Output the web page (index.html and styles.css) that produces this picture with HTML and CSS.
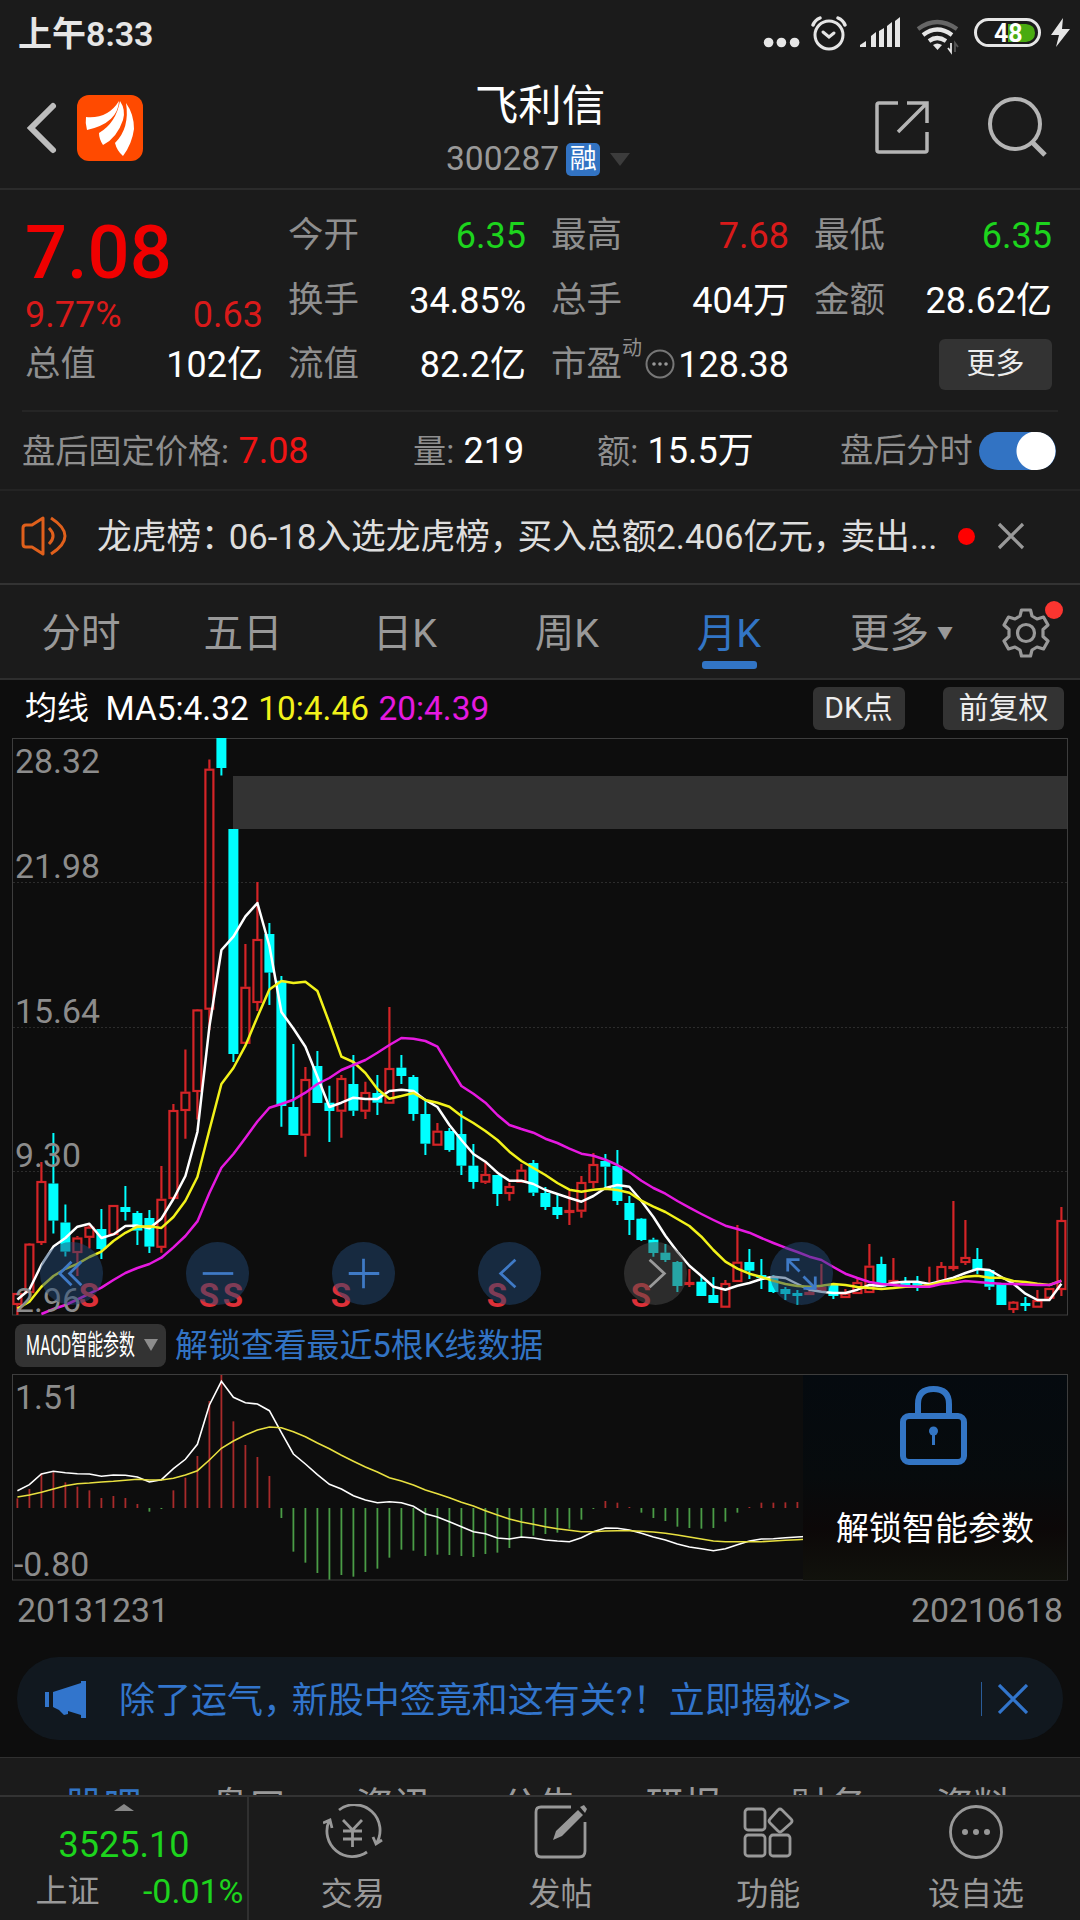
FILE: index.html
```
<!DOCTYPE html>
<html lang="zh-CN">

<head>
  <meta charset="utf-8">
  <title>飞利信 300287</title>
  <link rel="stylesheet" href="styles.css">
</head>

<body>
  <div class="page">
    <div class="statusBar">
      <span>上午8:33</span>
      <svg class="statusIcons" width="312" height="66" viewBox="760 0 312 66">
        <g fill="#e6e6e6">
          <circle cx="768.6" cy="42.5" r="4.8" />
          <circle cx="781.4" cy="42.5" r="4.8" />
          <circle cx="794.6" cy="42.5" r="4.8" />
          <path d="M860 47v-2l6-4v6zM871 47V36l5-4v15zM879 47V31l5-3v19zM887 47V26l5-4v25zM895 47V21l5-4v30z" />
          <path d="M1063 18l-12 17h8l-3 12 14-18h-8z" />
        </g>
        <g fill="none" stroke="#e6e6e6" stroke-width="3" stroke-linecap="round">
          <circle cx="829" cy="35" r="14" />
          <path d="M823 32l6 5 5-4" />
          <path d="M813 25q2-5 7-7M838 18q5 2 7 7" stroke-width="3.5" />
          <rect x="975.500" y="19.500" width="64" height="26" rx="13" />
        </g>
        <g fill="none" stroke="#e6e6e6" stroke-width="4.200">
          <path d="M918 29q19-14 39 0" stroke="#666" />
          <path d="M923 35q14-11 29 0M929 41q8-6 17 0" />
        </g>
        <path d="M933 45q4-3 9 0l-4.500 5z" fill="#e6e6e6" />
        <path d="M951 43v9l-3-4" stroke="#e6e6e6" stroke-width="1.800" fill="none" />
        <path d="M955 52v-9l3 4" stroke="#555" stroke-width="1.800" fill="none" />
        <path d="M1008 24h18q9 1 9 9t-9 9h-18z" fill="#4aab11" />
        <text x="994" y="42" class="battery">48</text>
      </svg>
    </div>

    <div class="header">
      <div class="headerLeft">
        <svg width="34" height="56" viewBox="0 0 34 56">
          <path d="M29 6L7 28l22 22" fill="none" stroke="#bdbdbd" stroke-width="6" stroke-linecap="round" />
        </svg>
        <svg class="logo" width="66" height="66" viewBox="0 0 66 66">
          <rect width="66" height="66" rx="12" fill="#ff4a00" />
          <g fill="#fff">
            <path d="M9 22Q31 24 42 6Q41 28 10 35Q8 28 9 22z" />
            <path d="M43 6Q49 15 46 25Q40 43 26 50Q22 44 22 38Q39 28 43 6z" />
            <path d="M49 8Q57 19 57 34Q55 49 46 61Q40 56 38 48Q53 33 49 8z" />
          </g>
        </svg>
      </div>
      <div class="headerTitle">
        <div class="name">飞利信</div>
        <div class="code">300287<span class="tag">融</span><i class="arrowDown"></i></div>
      </div>
      <div class="headerRight">
        <svg width="56" height="56" viewBox="0 0 56 56" fill="none" stroke="#b5b5b5" stroke-width="3.500">
          <path d="M24 4H5q-2 0-2 2v45q0 2 2 2h46q2 0 2-2V33M33 4h20v20M53 4L24 33" />
        </svg>
        <svg width="60" height="64" viewBox="0 0 60 64" fill="none" stroke="#b5b5b5" stroke-width="4">
          <circle cx="28" cy="29" r="25" />
          <path d="M45 47l13 13" stroke-width="5" />
        </svg>
      </div>
    </div>

    <div class="quote">
      <div class="col">
        <div class="price">7.08</div>
        <div class="change"><span>9.77%</span><span>0.63</span></div>
        <div class="row"><label>总值</label><b>102亿</b></div>
      </div>
      <div class="col">
        <div class="row"><label>今开</label><b class="green">6.35</b></div>
        <div class="row"><label>换手</label><b>34.85%</b></div>
        <div class="row"><label>流值</label><b>82.2亿</b></div>
      </div>
      <div class="col">
        <div class="row"><label>最高</label><b class="red">7.68</b></div>
        <div class="row"><label>总手</label><b>404万</b></div>
        <div class="row"><label>市盈<sup>动</sup></label>
          <svg class="dots" width="32" height="32" viewBox="0 0 32 32">
            <circle cx="16" cy="16" r="13.500" fill="none" stroke="#777" stroke-width="2" />
            <g fill="#999">
              <circle cx="10" cy="16" r="1.800" />
              <circle cx="16" cy="16" r="1.800" />
              <circle cx="22" cy="16" r="1.800" />
            </g>
          </svg>
          <b>128.38</b>
        </div>
      </div>
      <div class="col">
        <div class="row"><label>最低</label><b class="green">6.35</b></div>
        <div class="row"><label>金额</label><b>28.62亿</b></div>
        <div class="row"><button class="more">更多</button></div>
      </div>
    </div>

    <div class="after">
      <div class="fixed">盘后固定价格: <b class="red">7.08</b></div>
      <div class="vol">量: <b>219</b></div>
      <div class="amt">额: <b>15.5万</b></div>
      <div class="switchBox">盘后分时<span class="switch"></span></div>
    </div>

    <div class="news">
      <svg width="50" height="44" viewBox="0 0 50 44" fill="none" stroke="#e0601c" stroke-width="3" stroke-linejoin="round">
        <path d="M3 14q0-3 3-3h6L23 4v36L12 33H6q-3 0-3-3z" />
        <path d="M29 14q8 8 0 16M31 4q28 18 0 36" />
      </svg>
      <div class="newsText">龙虎榜<span class="pt">：</span>06-18入选龙虎榜<span class="pt">，</span>买入总额2.406亿元<span class="pt">，</span>卖出...</div>
      <i class="dot"></i>
      <svg width="28" height="28" viewBox="0 0 28 28" stroke="#999" stroke-width="3.200">
        <path d="M2 2l24 24M26 2L2 26" />
      </svg>
    </div>

    <div class="tabs">
      <a>分时</a>
      <a>五日</a>
      <a>日K</a>
      <a>周K</a>
      <a class="active">月K</a>
      <a class="moreTab">更多<i>▼</i></a>
      <a class="gear">
        <svg width="50" height="50" viewBox="0 0 50 50" fill="none" stroke="#999" stroke-width="3.200" stroke-linejoin="round">
          <path d="M20.500 2h9l1.500 6 5 3 6.500-2 4.500 8-5 4.500v7l5 4.500-4.500 8-6.500-2-5 3-1.500 6h-9L19 42l-5-3-6.500 2L3 33l5-4.500v-7L3 17l4.500-8L14 11l5-3z" />
          <circle cx="25" cy="25" r="8.500" />
        </svg>
        <i class="badge"></i>
      </a>
    </div>

    <div class="maBar">
      <span class="maName">均线</span>
      <span>MA5:4.32</span>
      <span class="yellow">10:4.46</span>
      <span class="pink">20:4.39</span>
      <button class="dk">DK点</button>
      <button>前复权</button>
    </div>

    <div class="kline">
      <svg id="kline" width="1080" height="578" viewBox="0 738 1080 578">
        <rect x="12.500" y="738.500" width="1055" height="576.500" fill="none" stroke="#3d3d3d" />
        <path class="grid" d="M13 882.500h1054M13 1027.500h1054M13 1171.500h1054" />
        <rect x="233" y="776" width="834" height="53" fill="#333" />
        <g id="candles"></g>
        <polyline id="ma5" class="ma" stroke="#fff" />
        <polyline id="ma10" class="ma" stroke="#f2f21a" />
        <polyline id="ma20" class="ma" stroke="#e619e0" />
        <g class="sell">
          <text x="89" y="1307">S</text>
          <text x="209" y="1307">S</text>
          <text x="233" y="1307">S</text>
          <text x="341" y="1307">S</text>
          <text x="497" y="1307">S</text>
          <text x="641" y="1307">S</text>
        </g>
        <g class="axis">
          <text x="15" y="773">28.32</text>
          <text x="15" y="878">21.98</text>
          <text x="15" y="1023">15.64</text>
          <text x="15" y="1167">9.30</text>
          <text x="15" y="1312">2.96</text>
        </g>
      </svg>
      <div class="tools">
        <span><svg viewBox="0 0 64 64"><path d="M32 20L20 32l12 12M42 20L30 32l12 12" /></svg></span>
        <span><svg viewBox="0 0 64 64"><path d="M17 32h31" /></svg></span>
        <span><svg viewBox="0 0 64 64"><path d="M17 32h31M32 17v30" /></svg></span>
        <span><svg viewBox="0 0 64 64"><path d="M38 18L23 32l15 14" /></svg></span>
        <span class="off"><svg viewBox="0 0 64 64"><path d="M26 18l15 14-15 14" /></svg></span>
        <span><svg viewBox="0 0 64 64"><path d="M18 30V18h12M18 18l12 12M46 35v12H34M46 47L34 35" /></svg></span>
      </div>
    </div>

    <div class="macdBar">
      <button>
        <svg width="110" height="40" viewBox="0 0 110 40"><text x="0" y="30" textLength="109" lengthAdjust="spacingAndGlyphs">MACD智能参数</text></svg>
        <i class="arrowDown"></i>
      </button>
      <a>解锁查看最近5根K线数据</a>
    </div>

    <div class="macd">
      <svg width="1080" height="208" viewBox="0 1373 1080 208">
        <g id="bars"></g>
        <polyline id="dif" class="thin" stroke="#fff" />
        <polyline id="dea" class="thin" stroke="#e8e040" />
        <rect x="12.500" y="1374.500" width="1055" height="205.500" fill="none" stroke="#3d3d3d" />
        <g class="axis">
          <text x="15" y="1409">1.51</text>
          <text x="14" y="1576">-0.80</text>
        </g>
      </svg>
      <div class="lock">
        <svg width="68" height="80" viewBox="0 0 68 80" fill="none" stroke="#3375c4" stroke-width="6">
          <rect x="4" y="31" width="61" height="46" rx="6" />
          <path d="M19 31V19q0-15 15.500-15T50 19v12" />
          <circle cx="34.500" cy="46" r="4.500" fill="#3375c4" stroke="none" />
          <path d="M34.500 48v12" stroke-width="3" />
        </svg>
        <span>解锁智能参数</span>
      </div>
    </div>
    <div class="dates"><span>20131231</span><span>20210618</span></div>

    <div class="banner">
      <svg width="42" height="38" viewBox="0 0 42 38" fill="#3275cc">
        <path d="M0 12h4v15H0zM8 12L36 3V1h5v37h-5v-3l-13-4v3l-4 1-5-5-6-3z" />
      </svg>
      <span>除了运气<em>，</em>新股中签竟和这有关?！立即揭秘&gt;&gt;</span>
      <i></i>
      <svg width="30" height="30" viewBox="0 0 30 30" stroke="#3275cc" stroke-width="3.200">
        <path d="M1 1l28 28M29 1L1 29" />
      </svg>
    </div>

    <div class="subTabs">
      <a class="active">股吧</a>
      <a>盘口</a>
      <a>资讯</a>
      <a>公告</a>
      <a>研报</a>
      <a>财务</a>
      <a>资料</a>
    </div>

    <div class="bottomNav">
      <div class="index">
        <i class="arrowUp"></i>
        <div class="indexValue">3525.10</div>
        <div class="indexRow"><span>上证</span><b class="green">-0.01%</b></div>
      </div>
      <a>
        <svg width="60" height="56" viewBox="0 0 60 56">
          <path d="M16 6a25.500 25.500 0 0 1 37 34M44 48A25.500 25.500 0 0 1 6 17M0 19l7-3 2 8M59 36l-6 4-3-7M20 16l9.500 10 9.500-10M20 27h19M20 35h19M29.500 26v17" />
        </svg>
        交易
      </a>
      <a>
        <svg width="60" height="56" viewBox="0 0 60 56">
          <path d="M40 3H10q-5 0-5 5v39q0 6 5 6h38q6 0 6-6V18" />
          <path d="M22 36l3-9L47 6l5 5-21 21zM49 3l4-2 3 4-2 4z" fill="#999" stroke="none" />
        </svg>
        发帖
      </a>
      <a>
        <svg width="60" height="56" viewBox="0 0 60 56">
          <rect x="7" y="5" width="20" height="21" rx="3" />
          <rect x="7" y="31" width="20" height="21" rx="3" />
          <rect x="32" y="31" width="20" height="21" rx="3" />
          <path d="M40 6q2-2 4 0l9 9q2 2 0 4l-9 8q-2 2-4 0l-8-8q-2-2 0-4z" />
        </svg>
        功能
      </a>
      <a>
        <svg width="60" height="56" viewBox="0 0 60 56">
          <circle cx="30" cy="28" r="25.500" />
          <g fill="#999" stroke="none">
            <circle cx="19" cy="28" r="3" />
            <circle cx="30" cy="28" r="3" />
            <circle cx="41" cy="28" r="3" />
          </g>
        </svg>
        设自选
      </a>
    </div>
  </div>
  <script src="chart.js"></script>
</body>

</html>
```
FILE: styles.css
```
body {
  margin: 0;
  padding: 0;
  background: #1b1b1b;
  color: #999;
  font-family: Roboto, "Noto Sans CJK SC", sans-serif;
  line-height: 1.17;
}

.page {
  width: 1080px;
  height: 1920px;
  overflow: hidden;
  display: flex;
  flex-direction: column;
}

.page > div {
  box-sizing: border-box;
  flex-shrink: 0;
}

b {
  font-weight: 400;
  color: #fff;
}

i {
  font-style: normal;
}

svg {
  display: block;
  flex-shrink: 0;
}

button {
  border: none;
  border-radius: 6px;
  background: #333;
  color: #eee;
  font-family: inherit;
  line-height: 1.17;
  padding: 0;
}

.green {
  color: #1dd41d;
}

.red {
  color: #d91a1a;
}

.yellow {
  color: #f2f21a;
}

.pink {
  color: #e619e0;
}

.arrowDown {
  border: 10px solid transparent;
  border-top: 13px solid #3c3c3c;
  border-bottom: none;
}

/* status bar */
.statusBar {
  height: 66px;
  padding: 0 8px 0 18px;
  display: flex;
  justify-content: space-between;
  align-items: center;
  color: #e6e6e6;
  font-size: 34px;
  font-weight: 600;
}

.statusBar span {
  padding-top: 3px;
}

.statusIcons .battery {
  fill: #fff;
  font-size: 25px;
  font-weight: 700;
}

/* header */
.header {
  height: 124px;
  border-bottom: 2px solid #2b2b2b;
  display: grid;
  grid-template-columns: 1fr 300px 1fr;
}

.headerLeft {
  display: flex;
  align-items: center;
  padding: 2px 0 0 24px;
}

.logo {
  margin-left: 19px;
}

.headerTitle {
  text-align: center;
}

.name {
  color: #fff;
  font-size: 43.5px;
  line-height: 50px;
  padding-top: 16px;
}

.code {
  font-size: 33.6px;
  line-height: 36px;
  padding-top: 9px;
  padding-left: 56px;
  display: flex;
  align-items: center;
}

.tag {
  width: 34px;
  height: 33px;
  margin: 0 10px 0 7px;
  border-radius: 5px;
  background: #3273c3;
  color: #fff;
  font-size: 27px;
  line-height: 32px;
}

.headerRight {
  display: flex;
  align-items: center;
  justify-content: flex-end;
  gap: 57px;
  padding: 0 33px 0 0;
}

/* quote numbers */
.quote {
  height: 220px;
  padding: 13px 28px 0 25px;
  display: grid;
  grid-template-columns: repeat(4, 238px);
  column-gap: 25px;
  align-content: start;
}

.price {
  height: 94px;
  line-height: 99px;
  font-size: 74px;
  font-weight: 500;
  color: #f00000;
}

.change {
  height: 35px;
  line-height: 36px;
  display: flex;
  justify-content: space-between;
  font-size: 36px;
  color: #d91a1a;
}

.row {
  height: 64.5px;
  display: flex;
  justify-content: space-between;
  align-items: center;
  font-size: 36px;
  white-space: nowrap;
}

.row label,
.row b {
  padding-top: 2px;
}

.row label {
  font-size: 35.5px;
  color: #8f8f8f;
}

.row sup {
  font-size: 20px;
  line-height: 0;
  vertical-align: 21px;
}

.row .more {
  width: 113px;
  height: 51px;
  margin-left: auto;
  padding-top: 1px;
  font-size: 29px;
}

/* after-hours row */
.after {
  height: 79px;
  margin: 0 22px;
  padding-top: 2px;
  border-top: 2px solid #252525;
  display: flex;
  align-items: center;
  font-size: 33.2px;
  color: #8f8f8f;
  white-space: nowrap;
}

.after b {
  font-size: 36px;
  margin-left: 1px;
}

.after .red {
  color: #f01414;
}

.fixed {
  width: 391px;
}

.vol {
  width: 184px;
}

.amt {
  width: 243px;
}

.switchBox {
  display: flex;
  align-items: center;
}

.switch {
  width: 77px;
  height: 38px;
  margin: -2px 0 0 6px;
  border-radius: 19px;
  background: radial-gradient(circle 20px at 57px 50%, #fff 19px, #3273c3 20px);
}

/* news line */
.news {
  height: 96px;
  border-top: 2px solid #242424;
  border-bottom: 2px solid #333;
  padding: 0 0 2px 20px;
  display: flex;
  align-items: center;
}

.newsText {
  width: 843px;
  margin-left: 27px;
  padding-top: 3px;
  color: #dedede;
  font-size: 34.7px;
  white-space: nowrap;
}

.newsText .pt {
  letter-spacing: -0.2em;
}

.dot {
  width: 17px;
  height: 17px;
  margin: 0 22px 0 18px;
  border-radius: 50%;
  background: #f00;
}

/* period tabs */
.tabs {
  height: 95px;
  display: flex;
  border-bottom: 2px solid #2e2e2e;
}

.tabs a {
  width: 162px;
  line-height: 98px;
  text-align: center;
  font-size: 39.5px;
  position: relative;
}

.tabs .active {
  color: #3275c5;
}

.tabs .active::after {
  content: "";
  position: absolute;
  left: 54px;
  bottom: 9px;
  width: 55px;
  height: 8px;
  border-radius: 3px;
  background: #3275c5;
}

.tabs .moreTab {
  display: flex;
  justify-content: center;
  gap: 8px;
  padding-left: 21px;
  width: 141px;
}

.moreTab i {
  font-size: 16px;
}

.tabs .gear {
  width: 108px;
  display: flex;
  align-items: center;
  justify-content: center;
  padding-top: 3px;
  box-sizing: border-box;
}

.badge {
  position: absolute;
  left: 73px;
  top: 16px;
  width: 18px;
  height: 18px;
  border-radius: 50%;
  background: #fb3530;
}

/* moving averages */
.maBar {
  height: 58px;
  padding: 0 16px 0 25px;
  background: #0d0d0d;
  display: flex;
  align-items: center;
  gap: 9.5px;
  font-size: 33.4px;
  color: #fff;
}

.maName {
  font-size: 32px;
  margin-right: 7px;
}

.maBar button {
  width: 121px;
  height: 43px;
  font-size: 30px;
  margin: -2px 0 0 29px;
}

.maBar .dk {
  width: 92px;
  margin-left: auto;
}

/* candle chart */
.kline {
  height: 578px;
  background: #0d0d0d;
  position: relative;
}

.grid {
  stroke: #2c2c2c;
  stroke-dasharray: 2 2;
}

.ma {
  fill: none;
  stroke-width: 2.5;
  stroke-linejoin: round;
}

.up {
  fill: none;
  stroke: #d42427;
  stroke-width: 2.2;
}

.down {
  fill: #00ffff;
  stroke: #00ffff;
  stroke-width: 2;
}

.sell {
  fill: #dd3038;
  font-size: 33px;
  font-weight: 700;
  text-anchor: middle;
}

.axis {
  fill: #8c8c8c;
  font-size: 33.8px;
}

.tools {
  position: absolute;
  left: 40px;
  top: 504px;
  display: flex;
  gap: 83px;
}

.tools span {
  width: 63px;
  height: 63px;
  border-radius: 50%;
  background: rgba(34, 72, 116, 0.5);
}

.tools path {
  fill: none;
  stroke: #3f7ac6;
  stroke-width: 2.8;
}

.tools .off {
  background: rgba(75, 75, 75, 0.5);
}

.tools .off path {
  stroke: #9a9a9a;
}

/* macd */
.macdBar {
  height: 57px;
  padding: 0 16px 0 15px;
  background: #0d0d0d;
  display: flex;
  align-items: center;
}

.macdBar button {
  width: 151px;
  height: 43px;
  margin-top: 1px;
  border-radius: 8px;
  display: flex;
  align-items: center;
  padding-left: 11px;
  box-sizing: border-box;
}

.macdBar text {
  fill: #fff;
  font-size: 28px;
}

.macdBar .arrowDown {
  margin-left: 8px;
  border-width: 12px 7px 0;
  border-top-color: #8c8c8c;
}

.macdBar a {
  margin-left: 9px;
  padding-top: 4px;
  font-size: 32.9px;
  color: #3273c3;
}

.macd {
  height: 208px;
  background: #0d0d0d;
  position: relative;
}

.thin {
  fill: none;
  stroke-width: 1.6;
}

.lock {
  position: absolute;
  left: 803px;
  top: 2px;
  width: 264px;
  height: 205px;
  background: linear-gradient(#050a0f, #070b0d 50%, #0c0808 75%, #11120c);
  display: flex;
  flex-direction: column;
  align-items: center;
  color: #fff;
  font-size: 33px;
}

.lock svg {
  margin: 10px 0 0 -4px;
}

.lock span {
  line-height: 40px;
  margin-top: 44px;
}

.dates {
  height: 76px;
  padding: 7px 17px 0 17px;
  background: #0d0d0d;
  display: flex;
  justify-content: space-between;
  line-height: 46px;
  font-size: 33.8px;
  color: #8c8c8c;
}

/* promo banner */
.banner {
  height: 83px;
  padding: 0 35px 0 28px;
  border-radius: 42px;
  margin: 0 17px;
  background: #11181f;
  box-shadow: 0 0 0 50px #0d0d0d;
  clip-path: inset(0 -17px -17px);
  display: flex;
  align-items: center;
  font-size: 36px;
  color: #3275cc;
}

.banner span {
  flex: 1;
  margin: 5px 0 0 32px;
  white-space: nowrap;
}

.banner em {
  font-style: normal;
  letter-spacing: -0.2em;
}

.banner i {
  width: 1px;
  height: 34px;
  margin-right: 16px;
  background: #2a5c99;
}

/* section tabs, cut off by the bottom bar */
.subTabs {
  height: 39px;
  margin-top: 16px;
  padding: 0 31px;
  border-top: 2px solid #303030;
  overflow: hidden;
  display: flex;
}

.subTabs a {
  width: 145px;
  font-size: 38px;
  line-height: 56px;
  padding-top: 20px;
  text-align: center;
}

.subTabs .active {
  color: #3275c5;
}

/* bottom bar */
.bottomNav {
  height: 125px;
  border-top: 2px solid #333;
  display: flex;
}

.index {
  width: 249px;
  box-sizing: border-box;
  border-right: 2px solid #303030;
  display: flex;
  flex-direction: column;
  align-items: center;
}

.arrowUp {
  margin-top: 7px;
  border: 10px solid transparent;
  border-bottom: 7px solid #888;
  border-top: none;
}

.indexValue {
  font-size: 36px;
  line-height: 42px;
  margin: 13px 0 0 1px;
  color: #1dd41d;
}

.indexRow {
  width: 208px;
  display: flex;
  justify-content: space-between;
  align-items: center;
  font-size: 32px;
  line-height: 48px;
  margin: 1px 0 0 32px;
}

.indexRow b {
  font-size: 34px;
  color: #1dd41d;
}

.bottomNav a {
  flex: 1;
  display: flex;
  flex-direction: column;
  align-items: center;
  padding-top: 7px;
  font-size: 32px;
  line-height: 48px;
}

.bottomNav a svg {
  margin-bottom: 10px;
  fill: none;
  stroke: #999;
  stroke-width: 2.8;
}
```
FILE: chart.js
```
// one month per candle: colour, high, body top, body bottom, low
const candles = [
  ['r', 1293, 1293, 1305, 1315], ['r', 1243, 1243.6, 1293, 1293], ['r', 1162, 1181, 1243, 1245], ['c', 1133, 1183.5, 1220.6, 1233.6],
  ['c', 1204.5, 1222.5, 1251.6, 1256.6], ['r', 1236, 1237.5, 1253, 1276], ['r', 1224, 1226.7, 1237.8, 1248.6], ['c', 1209, 1229, 1249, 1259],
  ['r', 1205, 1205, 1235, 1235], ['c', 1186, 1207, 1212, 1220.6], ['c', 1211, 1213, 1230.6, 1245], ['c', 1210, 1218, 1246.6, 1253],
  ['r', 1166, 1198.8, 1247.8, 1252.8], ['r', 1104, 1110, 1199, 1199], ['r', 1049.6, 1091.7, 1111, 1138.7], ['r', 1009, 1009.4, 1092, 1119.6],
  ['r', 759.5, 768.7, 1009.7, 1030], ['c', 738, 738, 768, 775.5], ['c', 829, 829, 1054, 1062], ['r', 944, 986.8, 1043.8, 1043.8],
  ['r', 882, 939, 1003, 1011], ['c', 923, 934, 972.6, 1005], ['c', 976, 980.7, 1106, 1126.7], ['c', 1044, 1107, 1135, 1135],
  ['r', 1067, 1079, 1135.7, 1156.7], ['c', 1051, 1066, 1103, 1103], ['c', 1085.7, 1102.7, 1111, 1142], ['r', 1075, 1078, 1111.7, 1137.7],
  ['c', 1055, 1084, 1110.7, 1116], ['r', 1081.7, 1092, 1111.7, 1119], ['c', 1075, 1093, 1102.7, 1115], ['r', 1007, 1068, 1103.7, 1103.7],
  ['c', 1055, 1067.7, 1076, 1084], ['c', 1075, 1077, 1114, 1120.7], ['c', 1100, 1114, 1143.7, 1155], ['r', 1123, 1130.7, 1145.7, 1145.7],
  ['c', 1128, 1131, 1150, 1151.7], ['c', 1110.7, 1134, 1165.7, 1175], ['c', 1144, 1165.7, 1182, 1188.7], ['r', 1162.7, 1174, 1182.7, 1184],
  ['c', 1175, 1175, 1194, 1206], ['r', 1182.7, 1186, 1194, 1200.7], ['r', 1164, 1169.7, 1182.7, 1182.7], ['c', 1160, 1163, 1192.7, 1196],
  ['c', 1187, 1193, 1207, 1210], ['c', 1195, 1207, 1215, 1219], ['r', 1190.7, 1210, 1213, 1225], ['r', 1176, 1182, 1211.7, 1217.7],
  ['r', 1153, 1164, 1183, 1188], ['c', 1154, 1161, 1166.7, 1188], ['c', 1150, 1166, 1201, 1205], ['c', 1196, 1203, 1220, 1235],
  ['c', 1218, 1218.7, 1240, 1241], ['c', 1237.7, 1239.7, 1253, 1256.7], ['c', 1244, 1252.7, 1260, 1262], ['c', 1261, 1262, 1286, 1292],
  ['r', 1269, 1282, 1285, 1287], ['c', 1276, 1281.7, 1296, 1296], ['c', 1277, 1295, 1303, 1303], ['r', 1280, 1283, 1307.7, 1307.7],
  ['r', 1225, 1261.7, 1282, 1282], ['c', 1249, 1262, 1270.7, 1279], ['c', 1259, 1275, 1278, 1289], ['c', 1275, 1278, 1292, 1293],
  ['c', 1287, 1289, 1294, 1300], ['c', 1290, 1293, 1295, 1304.7], ['r', 1290, 1292, 1295, 1295], ['r', 1264, 1287, 1291, 1291],
  ['c', 1283, 1285, 1296, 1299], ['r', 1289, 1293, 1298, 1298], ['r', 1278, 1282, 1294, 1294], ['r', 1244, 1265.7, 1293, 1293],
  ['c', 1256.7, 1264, 1286.7, 1286.7], ['r', 1258, 1280, 1283, 1283], ['c', 1277, 1281, 1285, 1288], ['c', 1276, 1282, 1285.7, 1291],
  ['r', 1266.7, 1284, 1287, 1287], ['r', 1262, 1266, 1281.7, 1281.7], ['r', 1201, 1266, 1267.7, 1270.7], ['r', 1220, 1257, 1263, 1265],
  ['c', 1248, 1259, 1270, 1274], ['c', 1269, 1270, 1286.7, 1290], ['c', 1284, 1284, 1305, 1305], ['r', 1301, 1301.7, 1310, 1313],
  ['c', 1297, 1303, 1305, 1311], ['r', 1290, 1300, 1307.7, 1307.7], ['r', 1288, 1288, 1298.7, 1298.7], ['r', 1207, 1220, 1290, 1296]
];

const ma5 = [1299.5, 1289.5, 1265, 1246.6, 1238, 1226.7, 1223.7, 1238, 1234.4, 1226, 1225.6, 1228.3, 1218.7, 1199, 1176, 1132,
  1026.6, 950, 936.7, 916.4, 903, 946, 1012, 1028.5, 1046.7, 1076.7, 1107, 1102.7, 1097.7, 1099, 1099, 1091, 1089.7, 1091, 1100,
  1107, 1125, 1140, 1154, 1161.7, 1172.7, 1180.7, 1180.7, 1184, 1190, 1194, 1198, 1201.7, 1196, 1188, 1185, 1186.7, 1201, 1217,
  1235.7, 1251.7, 1265.7, 1276, 1286.7, 1289.7, 1285.7, 1283, 1279, 1276.7, 1278, 1284, 1289.7, 1291.7, 1293, 1293, 1289.7, 1285,
  1286, 1282.7, 1281.7, 1281.7, 1284, 1281, 1277.7, 1273, 1269, 1270, 1277, 1283.7, 1293.7, 1300, 1300, 1283.7];

const ma10 = [1308.6, 1301.7, 1286.8, 1276, 1268.8, 1263.8, 1257, 1251.6, 1241, 1232.8, 1226.7, 1226.3, 1227.9, 1217, 1200.7, 1177,
  1130, 1084, 1068, 1045.7, 1017, 989.5, 981, 983, 981.7, 991, 1023, 1056.7, 1062, 1073, 1089, 1098.7, 1096, 1093, 1100, 1102.7,
  1106.7, 1116, 1123, 1131, 1140, 1151.7, 1161, 1168, 1175, 1183, 1189.7, 1191.7, 1189.7, 1188.7, 1190, 1192.7, 1200.7, 1206.7,
  1212, 1219, 1226, 1236.7, 1250, 1261.7, 1268.7, 1273.7, 1277, 1280.7, 1284, 1286, 1286.7, 1285.7, 1284, 1285, 1287, 1288, 1289,
  1288, 1286.7, 1286.7, 1285, 1282, 1279.7, 1276.7, 1275.7, 1277.7, 1277.7, 1281, 1282, 1283.7, 1285, 1280.7];

const ma20 = [1314, 1309, 1305, 1299.5, 1293.7, 1287.6, 1280, 1273, 1268, 1264, 1257.7, 1247.4, 1236, 1221.4, 1193, 1167.8, 1154,
  1138, 1121.5, 1107.7, 1104, 1099.7, 1092.7, 1084, 1078, 1070, 1065, 1060, 1052.7, 1045, 1038, 1038.7, 1041, 1046.7, 1066.7, 1086,
  1093.7, 1102.7, 1115, 1125, 1129, 1132.7, 1138.7, 1143, 1148.7, 1153.7, 1155.7, 1159.7, 1165, 1172, 1180.7, 1188, 1193.7, 1201,
  1207.7, 1214, 1220, 1225.7, 1229, 1232.7, 1238, 1243, 1247.7, 1252, 1256.7, 1260, 1267, 1273.7, 1278, 1282, 1284, 1285, 1286,
  1286.7, 1286.7, 1284, 1282.7, 1281, 1282, 1283, 1283.7, 1284, 1284.5, 1285, 1285, 1280.7];

// macd values are thirds of a pixel below 1310
const bars = [565, 537, 490, 487, 517, 530, 541, 564, 558, 564, 582, 605, 597, 541, 503, 438, 273, 194, 334, 405, 441, 498, 624,
  725, 758, 789, 810, 795, 800, 786, 776, 743, 719, 722, 738, 734, 735, 738, 741, 732, 728, 714, 683, 677, 672, 668, 656, 629, 597,
  573, 578, 591, 608, 624, 633, 650, 654, 656, 654, 635, 608, 591, 578, 578, 577, 576];

const dif = [542, 524, 492, 484, 488, 491, 492, 499, 495, 496, 501, 516, 509, 476, 448, 403, 285, 214, 262, 278, 282, 302, 368, 432,
  462, 494, 523, 537, 557, 570, 578, 575, 578, 589, 611, 621, 635, 650, 665, 671, 684, 687, 681, 684, 690, 693, 695, 683, 665, 654,
  655, 660, 670, 681, 690, 702, 711, 716, 722, 716, 704, 693, 687, 686, 683, 681, 679];

const dea = [561, 555, 547, 537, 527, 521, 519, 516, 514, 511, 508, 510, 510, 505, 495, 482, 450, 415, 393, 375, 360, 351, 353, 365,
  380, 399, 416, 436, 454, 471, 486, 503, 513, 525, 540, 551, 563, 577, 588, 602, 615, 627, 636, 643, 650, 656, 661, 665, 665, 663,
  662, 662, 664, 666, 670, 675, 681, 687, 693, 695, 695, 695, 695, 693, 691, 689, 687];

function posX(i) {
  return 17.4 + i * 12;
}

function macdY(v) {
  return 1310 + v / 3;
}

function drawLine(id, values, start) {
  const points = values.map((y, i) => posX(i + start).toFixed(1) + ',' + y.toFixed(1));
  document.getElementById(id).setAttribute('points', points.join(' '));
}

let html = '';
candles.forEach(function (c, i) {
  const x = posX(i);
  const cls = c[0] === 'r' ? 'up' : 'down';
  const h = Math.max(c[3] - c[2] - 2, 1);
  html += `<path class="${cls}" d="M${x} ${c[1]}V${c[2]}M${x} ${c[3]}V${c[4]}"/>`;
  html += `<rect class="${cls}" x="${x - 4}" y="${c[2] + 1}" width="8" height="${h}"/>`;
});
document.getElementById('candles').innerHTML = html;

drawLine('ma5', ma5, 0);
drawLine('ma10', ma10, 0);
drawLine('ma20', ma20, 2);

html = '';
bars.forEach(function (v, i) {
  const color = v < 594 ? '#a82a2a' : '#4a9c46';
  html += `<path d="M${posX(i)} 1508V${macdY(v)}" stroke="${color}" stroke-width="1.8"/>`;
});
document.getElementById('bars').innerHTML = html;

drawLine('dif', dif.map(macdY), 0);
drawLine('dea', dea.map(macdY), 0);
```
